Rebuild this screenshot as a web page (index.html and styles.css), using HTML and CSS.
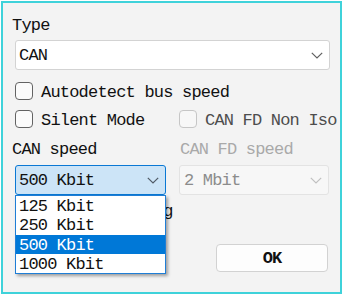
FILE: index.html
```html
<!DOCTYPE html>
<html>
<head>
<meta charset="utf-8">
<link rel="stylesheet" href="styles.css">
</head>
<body>
<div class="frame">
  <div class="lbl">Type</div>
  <div class="combo wide">
    <span class="val">CAN</span>
    <svg class="chev" width="12" height="7" viewBox="0 0 12 7"><polyline points="0.8,0.8 6,6 11.2,0.8" fill="none" stroke="#606060" stroke-width="1.2"/></svg>
  </div>
  <div class="chk r1"><span class="box"></span><span class="txt">Autodetect bus speed</span></div>
  <div class="row2">
    <div class="chk first"><span class="box"></span><span class="txt">Silent Mode</span></div>
    <div class="chk dis"><span class="box"></span><span class="txt">CAN FD Non Iso</span></div>
  </div>
  <div class="grid">
    <div class="lbl">CAN speed</div>
    <div class="lbl dis">CAN FD speed</div>
    <div class="anchor">
      <div class="combo focus">
        <span class="val">500 Kbit</span>
        <svg class="chev" width="12" height="7" viewBox="0 0 12 7"><polyline points="0.8,0.8 6,6 11.2,0.8" fill="none" stroke="#505a66" stroke-width="1.2"/></svg>
      </div>
      <ul class="popup">
        <li>125 Kbit</li>
        <li>250 Kbit</li>
        <li class="sel">500 Kbit</li>
        <li>1000 Kbit</li>
      </ul>
    </div>
    <div class="combo disabled">
      <span class="val">2 Mbit</span>
      <svg class="chev" width="12" height="7" viewBox="0 0 12 7"><polyline points="0.8,0.8 6,6 11.2,0.8" fill="none" stroke="#c0c0c0" stroke-width="1.2"/></svg>
    </div>
    <div class="chk r3"><span class="box"></span><span class="txt">Use Bit Timing</span></div>
    <div></div>
    <div class="btn set">Set Timing</div>
    <div class="btn ok">OK</div>
  </div>
</div>
</body>
</html>
```

FILE: styles.css
```css
html, body {
  margin: 0;
  padding: 0;
  background: #ffffff;
}
body {
  font-family: "Courier New", "Nimbus Mono PS", "FreeMono", "Liberation Mono", monospace;
  font-size: 17px;
  letter-spacing: -0.8px;
  color: #111111;
}
.frame {
  box-sizing: border-box;
  width: 341px;
  height: 293px;
  margin: 1px;
  border: 2px solid #3fd2da;
  background: #f3f3f3;
  padding: 14px 10px 0 12px;
}
.lbl {
  height: 18px;
  line-height: 18px;
  margin-left: -3px;
  white-space: nowrap;
}
.lbl.dis {
  color: #a9a9a9;
  margin-left: 1px;
}
.combo {
  box-sizing: border-box;
  height: 30px;
  border: 1px solid #d3d3d3;
  border-radius: 3px;
  background: #ffffff;
  display: flex;
  align-items: center;
  justify-content: space-between;
  padding: 1px 6px 0 3px;
  white-space: nowrap;
}
.combo.wide {
  margin-top: 5px;
  width: 315px;
}
.combo .val {
  line-height: 20px;
}
.chev {
  display: block;
  flex: none;
}
.combo.focus {
  border-color: #0a78d4;
  background: #cce4f7;
}
.combo.disabled {
  background: #f7f7f7;
  border-color: #e3e3e3;
  color: #8c8c8c;
  padding-left: 4px;
}
.chk {
  display: flex;
  align-items: flex-start;
  height: 18px;
  gap: 8px;
  white-space: nowrap;
  flex: none;
}
.chk .box {
  box-sizing: border-box;
  flex: none;
  width: 18px;
  height: 18px;
  border: 1px solid #636363;
  border-radius: 4px;
  background: #fbfbfb;
}
.chk .txt {
  line-height: 19px;
  padding-top: 1px;
}
.chk.dis .box {
  border-color: #c6c6c6;
  background: #f7f7f7;
}
.chk.dis .txt {
  color: #4d4d4d;
}
.r1 {
  margin-top: 12px;
}
.row2 {
  margin-top: 10px;
  display: flex;
  width: 340px;
}
.row2 .first {
  width: 164px;
}
.grid {
  margin-top: 13px;
  display: grid;
  grid-template-columns: 151px 150px;
  column-gap: 13px;
  grid-template-rows: 18px 30px 18px 28px;
  row-gap: 0;
}
.grid > .anchor,
.grid > .combo.disabled {
  margin-top: 6px;
}
.grid > .r3 {
  margin-top: 12px;
}
.anchor {
  position: relative;
  z-index: 2;
}
.anchor .combo {
  height: 30px;
}
.popup {
  position: absolute;
  left: 0;
  top: 30px;
  box-sizing: border-box;
  width: 151px;
  height: 79px;
  margin: 0;
  padding: 0;
  list-style: none;
  background: #ffffff;
  border: 1px solid #1f7ed6;
  box-shadow: 2px 2px 3px rgba(0, 0, 0, 0.35);
}
.popup li {
  height: 19.25px;
  line-height: 19px;
  padding-left: 3px;
  padding-top: 1px;
  box-sizing: border-box;
  white-space: nowrap;
}
.popup li.sel {
  background: #0078d7;
  color: #ffffff;
}
.btn {
  box-sizing: border-box;
  height: 28px;
  width: 112px;
  border: 1px solid #d2d2d2;
  border-radius: 4px;
  background: #fdfdfd;
  display: flex;
  align-items: center;
  justify-content: center;
  margin-top: 37px;
  white-space: nowrap;
}
.btn.set {
  margin-left: 2px;
  padding-top: 6px;
}
.btn.ok {
  margin-left: 37px;
  font-weight: bold;
  letter-spacing: -1px;
}
```
